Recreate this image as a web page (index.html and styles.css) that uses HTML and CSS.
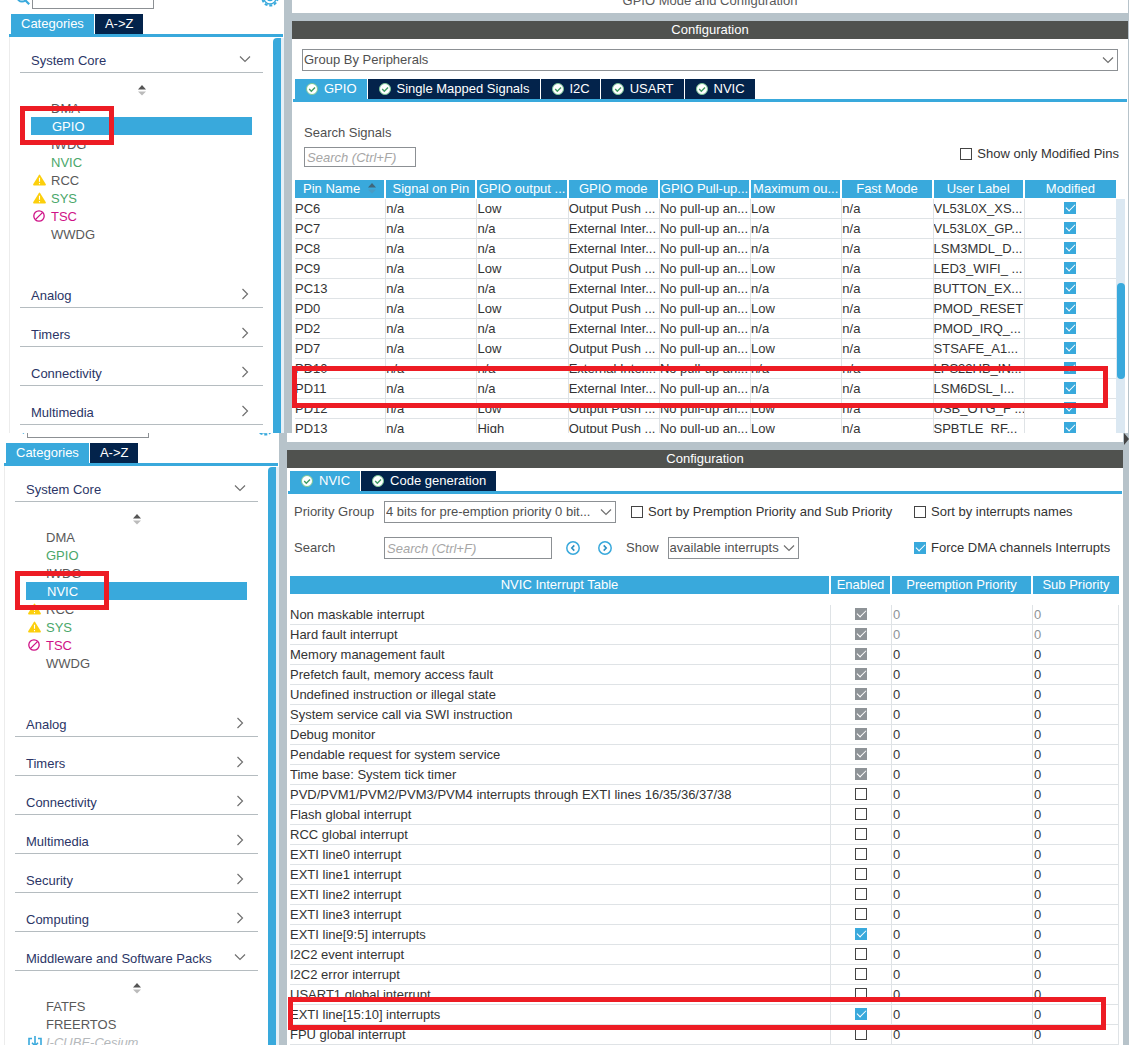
FILE: index.html
```html
<!DOCTYPE html>
<html lang="en">
<head>
<meta charset="utf-8">
<title>GPIO and NVIC Configuration</title>
<link rel="stylesheet" href="styles.css">
</head>
<body>
<svg class="defs" aria-hidden="true">
  <symbol id="ok" viewBox="0 0 12 12"><circle cx="6" cy="6" r="5.5" fill="#fff" stroke="#7cc796"/><path d="M3.2 6.1 5.3 8.2 9 4.4" fill="none" stroke="#3f9c62" stroke-width="1.4"/></symbol>
  <symbol id="down" viewBox="0 0 12 12"><path d="M1 3.5 6 8.5 11 3.5" fill="none" stroke="#707070" stroke-width="1.2"/></symbol>
  <symbol id="right" viewBox="0 0 12 12"><path d="M3.5 1 8.5 6 3.5 11" fill="none" stroke="#707070" stroke-width="1.2"/></symbol>
  <symbol id="sort" viewBox="0 0 8 12"><path d="M4 1 8 5.5H0Z" fill="#555"/><path d="M4 11.5 8 7.5H0Z" fill="#bbb"/></symbol>
  <symbol id="sorthead" viewBox="0 0 8 12"><path d="M4 1 8 5.5H0Z" fill="#40667a"/><path d="M4 11.5 8 7.5H0Z" fill="#4a9cc4"/></symbol>
  <symbol id="warn" viewBox="0 0 14 12"><path d="M6.2.8q.8-1.2 1.6 0l6 9.8q.3 1.2-.8 1.4H1q-1.1-.2-.8-1.4Z" fill="#fccf0c"/><path d="M7 3.5V8M7 9.2v1.4" stroke="#fff" stroke-width="1.2"/></symbol>
  <symbol id="no" viewBox="0 0 12 12"><circle cx="6" cy="6" r="5.2" fill="none" stroke="#cf1287" stroke-width="1.3"/><path d="M2.6 9.4 9.4 2.6" stroke="#cf1287" stroke-width="1.3"/></symbol>
  <symbol id="glass" viewBox="0 0 14 14"><circle cx="6" cy="6" r="4.6" fill="none" stroke="#39a9dc" stroke-width="2"/><path d="m9.3 9.3 3.9 3.9" stroke="#39a9dc" stroke-width="2.2"/></symbol>
  <symbol id="gear" viewBox="0 0 18 18"><circle cx="9" cy="9" r="7.6" fill="none" stroke="#39a9dc" stroke-width="2" stroke-dasharray="3 1.8"/><circle cx="9" cy="9" r="6" fill="none" stroke="#39a9dc" stroke-width="1.4"/><circle cx="9" cy="9" r="2.6" fill="none" stroke="#39a9dc" stroke-width="1.4"/></symbol>
  <symbol id="prev" viewBox="0 0 14 14"><circle cx="7" cy="7" r="6.2" fill="none" stroke="#39a9dc" stroke-width="1.5"/><path d="M8.3 4.4 5.8 7l2.5 2.6" fill="none" stroke="#2b8fc2" stroke-width="1.6"/></symbol>
  <symbol id="next" viewBox="0 0 14 14"><circle cx="7" cy="7" r="6.2" fill="none" stroke="#39a9dc" stroke-width="1.5"/><path d="M5.7 4.4 8.2 7 5.7 9.6" fill="none" stroke="#2b8fc2" stroke-width="1.6"/></symbol>
  <symbol id="install" viewBox="0 0 14 14"><path d="M4 2.5H1V13h12V2.5h-3M7 0v9.5M4 6.8l3 3 3-3" fill="none" stroke="#39a9dc" stroke-width="1.6"/></symbol>
</svg>

<section class="pane pane-gpio">
  <aside class="side">
    <div class="side-search">
      <svg class="i-glass"><use href="#glass"/></svg>
      <select aria-label="Search peripherals"><option></option></select>
      <svg class="i-gear"><use href="#gear"/></svg>
    </div>
    <nav class="tabs side-tabs"><button class="tab on">Categories</button><button class="tab">A-&gt;Z</button></nav>
    <div class="side-body">
      <div class="sections">
        <button class="head"><span>System Core</span><svg class="i12"><use href="#down"/></svg></button>
        <div class="open">
          <svg class="i-sort"><use href="#sort"/></svg>
          <ul>
            <li>DMA</li>
            <li class="selected">GPIO<span class="mark"></span></li>
            <li>IWDG</li>
            <li class="green">NVIC</li>
            <li><svg class="i-warn"><use href="#warn"/></svg>RCC</li>
            <li class="green"><svg class="i-warn"><use href="#warn"/></svg>SYS</li>
            <li class="pink"><svg class="i-no"><use href="#no"/></svg>TSC</li>
            <li>WWDG</li>
          </ul>
        </div>
        <button class="head"><span>Analog</span><svg class="i12"><use href="#right"/></svg></button>
        <button class="head"><span>Timers</span><svg class="i12"><use href="#right"/></svg></button>
        <button class="head"><span>Connectivity</span><svg class="i12"><use href="#right"/></svg></button>
        <button class="head"><span>Multimedia</span><svg class="i12"><use href="#right"/></svg></button>
      </div>
      <div class="side-scroll"></div>
    </div>
  </aside>
  <div class="gutter"></div>
  <main class="main">
    <div class="mode-title">GPIO Mode and Configuration</div>
    <h2 class="bar">Configuration</h2>
    <div class="combo group-by">
      <select aria-label="Group by"><option>Group By Peripherals</option></select>
      <svg class="i12"><use href="#down"/></svg>
    </div>
    <nav class="tabs">
      <button class="tab on"><svg class="i12"><use href="#ok"/></svg>GPIO</button><button class="tab"><svg class="i12"><use href="#ok"/></svg>Single Mapped Signals</button><button class="tab"><svg class="i12"><use href="#ok"/></svg>I2C</button><button class="tab"><svg class="i12"><use href="#ok"/></svg>USART</button><button class="tab"><svg class="i12"><use href="#ok"/></svg>NVIC</button>
    </nav>
    <div class="signals">
      <div class="signal-search">
        <label for="sig">Search Signals</label>
        <input id="sig" type="text" placeholder="Search (Ctrl+F)">
      </div>
      <label class="check"><input type="checkbox">Show only Modified Pins</label>
    </div>
    <div class="pins-wrap">
      <table class="pins">
        <thead><tr><th>Pin Name<svg class="i-sort"><use href="#sorthead"/></svg></th><th>Signal on Pin</th><th>GPIO output ...</th><th>GPIO mode</th><th>GPIO Pull-up...</th><th>Maximum ou...</th><th>Fast Mode</th><th>User Label</th><th>Modified</th></tr></thead>
        <tbody>
          <tr><td>PC6</td><td>n/a</td><td>Low</td><td>Output Push ...</td><td>No pull-up an...</td><td>Low</td><td>n/a</td><td>VL53L0X_XS...</td><td><input type="checkbox" aria-label="PC6 modified" checked></td></tr>
          <tr><td>PC7</td><td>n/a</td><td>n/a</td><td>External Inter...</td><td>No pull-up an...</td><td>n/a</td><td>n/a</td><td>VL53L0X_GP...</td><td><input type="checkbox" aria-label="PC7 modified" checked></td></tr>
          <tr><td>PC8</td><td>n/a</td><td>n/a</td><td>External Inter...</td><td>No pull-up an...</td><td>n/a</td><td>n/a</td><td>LSM3MDL_D...</td><td><input type="checkbox" aria-label="PC8 modified" checked></td></tr>
          <tr><td>PC9</td><td>n/a</td><td>Low</td><td>Output Push ...</td><td>No pull-up an...</td><td>Low</td><td>n/a</td><td>LED3_WIFI_ ...</td><td><input type="checkbox" aria-label="PC9 modified" checked></td></tr>
          <tr><td>PC13</td><td>n/a</td><td>n/a</td><td>External Inter...</td><td>No pull-up an...</td><td>n/a</td><td>n/a</td><td>BUTTON_EX...</td><td><input type="checkbox" aria-label="PC13 modified" checked></td></tr>
          <tr><td>PD0</td><td>n/a</td><td>Low</td><td>Output Push ...</td><td>No pull-up an...</td><td>Low</td><td>n/a</td><td>PMOD_RESET</td><td><input type="checkbox" aria-label="PD0 modified" checked></td></tr>
          <tr><td>PD2</td><td>n/a</td><td>n/a</td><td>External Inter...</td><td>No pull-up an...</td><td>n/a</td><td>n/a</td><td>PMOD_IRQ_...</td><td><input type="checkbox" aria-label="PD2 modified" checked></td></tr>
          <tr><td>PD7</td><td>n/a</td><td>Low</td><td>Output Push ...</td><td>No pull-up an...</td><td>Low</td><td>n/a</td><td>STSAFE_A1...</td><td><input type="checkbox" aria-label="PD7 modified" checked></td></tr>
          <tr><td>PD10</td><td>n/a</td><td>n/a</td><td>External Inter...</td><td>No pull-up an...</td><td>n/a</td><td>n/a</td><td>LPS22HB_IN...</td><td><input type="checkbox" aria-label="PD10 modified" checked></td></tr>
          <tr class="marked"><td>PD11<span class="mark"></span></td><td>n/a</td><td>n/a</td><td>External Inter...</td><td>No pull-up an...</td><td>n/a</td><td>n/a</td><td>LSM6DSL_I...</td><td><input type="checkbox" aria-label="PD11 modified" checked></td></tr>
          <tr><td>PD12</td><td>n/a</td><td>Low</td><td>Output Push ...</td><td>No pull-up an...</td><td>Low</td><td>n/a</td><td>USB_OTG_F ...</td><td><input type="checkbox" aria-label="PD12 modified" checked></td></tr>
          <tr><td>PD13</td><td>n/a</td><td>High</td><td>Output Push ...</td><td>No pull-up an...</td><td>Low</td><td>n/a</td><td>SPBTLE_RF...</td><td><input type="checkbox" aria-label="PD13 modified" checked></td></tr>
        </tbody>
      </table>
      <div class="track"><div class="thumb"></div></div>
    </div>
  </main>
  <div class="edge"></div>
</section>

<section class="pane pane-nvic">
  <aside class="side">
    <div class="side-search">
      <svg class="i-glass"><use href="#glass"/></svg>
      <select aria-label="Search peripherals"><option></option></select>
      <svg class="i-gear"><use href="#gear"/></svg>
    </div>
    <nav class="tabs side-tabs"><button class="tab on">Categories</button><button class="tab">A-&gt;Z</button></nav>
    <div class="side-body">
      <div class="sections">
        <button class="head"><span>System Core</span><svg class="i12"><use href="#down"/></svg></button>
        <div class="open">
          <svg class="i-sort"><use href="#sort"/></svg>
          <ul>
            <li>DMA</li>
            <li class="green">GPIO</li>
            <li>IWDG</li>
            <li class="selected">NVIC<span class="mark"></span></li>
            <li><svg class="i-warn"><use href="#warn"/></svg>RCC</li>
            <li class="green"><svg class="i-warn"><use href="#warn"/></svg>SYS</li>
            <li class="pink"><svg class="i-no"><use href="#no"/></svg>TSC</li>
            <li>WWDG</li>
          </ul>
        </div>
        <button class="head"><span>Analog</span><svg class="i12"><use href="#right"/></svg></button>
        <button class="head"><span>Timers</span><svg class="i12"><use href="#right"/></svg></button>
        <button class="head"><span>Connectivity</span><svg class="i12"><use href="#right"/></svg></button>
        <button class="head"><span>Multimedia</span><svg class="i12"><use href="#right"/></svg></button>
        <button class="head"><span>Security</span><svg class="i12"><use href="#right"/></svg></button>
        <button class="head"><span>Computing</span><svg class="i12"><use href="#right"/></svg></button>
        <button class="head"><span>Middleware and Software Packs</span><svg class="i12"><use href="#down"/></svg></button>
        <div class="open">
          <svg class="i-sort"><use href="#sort"/></svg>
          <ul>
            <li>FATFS</li>
            <li>FREERTOS</li>
            <li class="pack"><svg class="i-install"><use href="#install"/></svg>I-CUBE-Cesium</li>
          </ul>
        </div>
      </div>
      <div class="side-scroll"></div>
    </div>
  </aside>
  <div class="gutter"></div>
  <main class="main">
    <div class="mode-title"></div>
    <h2 class="bar">Configuration</h2>
    <nav class="tabs">
      <button class="tab on"><svg class="i12"><use href="#ok"/></svg>NVIC</button><button class="tab"><svg class="i12"><use href="#ok"/></svg>Code generation</button>
    </nav>
    <div class="options">
      <label for="prio">Priority Group</label>
      <div class="line">
        <div class="combo prio"><select id="prio"><option>4 bits for pre-emption priority 0 bit...</option></select><svg class="i12"><use href="#down"/></svg></div>
        <label class="check"><input type="checkbox">Sort by Premption Priority and Sub Priority</label>
      </div>
      <label class="check"><input type="checkbox">Sort by interrupts names</label>
      <label for="find">Search</label>
      <div class="line">
        <input id="find" type="text" placeholder="Search (Ctrl+F)">
        <div class="steps">
          <button class="step" aria-label="Previous"><svg><use href="#prev"/></svg></button>
          <button class="step" aria-label="Next"><svg><use href="#next"/></svg></button>
        </div>
        <label for="show">Show</label>
        <div class="combo show"><select id="show"><option>available interrupts</option></select><svg class="i12"><use href="#down"/></svg></div>
      </div>
      <label class="check"><input type="checkbox" checked>Force DMA channels Interrupts</label>
    </div>
    <table class="irqs">
      <colgroup><col><col class="c-en"><col class="c-pre"><col class="c-sub"></colgroup>
      <thead><tr><th>NVIC Interrupt Table</th><th>Enabled</th><th>Preemption Priority</th><th>Sub Priority</th></tr></thead>
      <tbody>
        <tr class="fixed"><td>Non maskable interrupt</td><td><input type="checkbox" aria-label="Enabled" checked disabled></td><td>0</td><td>0</td></tr>
        <tr class="fixed"><td>Hard fault interrupt</td><td><input type="checkbox" aria-label="Enabled" checked disabled></td><td>0</td><td>0</td></tr>
        <tr><td>Memory management fault</td><td><input type="checkbox" aria-label="Enabled" checked disabled></td><td>0</td><td>0</td></tr>
        <tr><td>Prefetch fault, memory access fault</td><td><input type="checkbox" aria-label="Enabled" checked disabled></td><td>0</td><td>0</td></tr>
        <tr><td>Undefined instruction or illegal state</td><td><input type="checkbox" aria-label="Enabled" checked disabled></td><td>0</td><td>0</td></tr>
        <tr><td>System service call via SWI instruction</td><td><input type="checkbox" aria-label="Enabled" checked disabled></td><td>0</td><td>0</td></tr>
        <tr><td>Debug monitor</td><td><input type="checkbox" aria-label="Enabled" checked disabled></td><td>0</td><td>0</td></tr>
        <tr><td>Pendable request for system service</td><td><input type="checkbox" aria-label="Enabled" checked disabled></td><td>0</td><td>0</td></tr>
        <tr><td>Time base: System tick timer</td><td><input type="checkbox" aria-label="Enabled" checked disabled></td><td>0</td><td>0</td></tr>
        <tr><td>PVD/PVM1/PVM2/PVM3/PVM4 interrupts through EXTI lines 16/35/36/37/38</td><td><input type="checkbox" aria-label="Enabled"></td><td>0</td><td>0</td></tr>
        <tr><td>Flash global interrupt</td><td><input type="checkbox" aria-label="Enabled"></td><td>0</td><td>0</td></tr>
        <tr><td>RCC global interrupt</td><td><input type="checkbox" aria-label="Enabled"></td><td>0</td><td>0</td></tr>
        <tr><td>EXTI line0 interrupt</td><td><input type="checkbox" aria-label="Enabled"></td><td>0</td><td>0</td></tr>
        <tr><td>EXTI line1 interrupt</td><td><input type="checkbox" aria-label="Enabled"></td><td>0</td><td>0</td></tr>
        <tr><td>EXTI line2 interrupt</td><td><input type="checkbox" aria-label="Enabled"></td><td>0</td><td>0</td></tr>
        <tr><td>EXTI line3 interrupt</td><td><input type="checkbox" aria-label="Enabled"></td><td>0</td><td>0</td></tr>
        <tr><td>EXTI line[9:5] interrupts</td><td><input type="checkbox" aria-label="Enabled" checked></td><td>0</td><td>0</td></tr>
        <tr><td>I2C2 event interrupt</td><td><input type="checkbox" aria-label="Enabled"></td><td>0</td><td>0</td></tr>
        <tr><td>I2C2 error interrupt</td><td><input type="checkbox" aria-label="Enabled"></td><td>0</td><td>0</td></tr>
        <tr><td>USART1 global interrupt</td><td><input type="checkbox" aria-label="Enabled"></td><td>0</td><td>0</td></tr>
        <tr class="marked"><td>EXTI line[15:10] interrupts<span class="mark"></span></td><td><input type="checkbox" aria-label="Enabled" checked></td><td>0</td><td>0</td></tr>
        <tr><td>FPU global interrupt</td><td><input type="checkbox" aria-label="Enabled"></td><td>0</td><td>0</td></tr>
      </tbody>
    </table>
  </main>
  <div class="edge"><svg viewBox="0 0 6 12"><path d="M1 0 6 6 1 12Z" fill="#444"/></svg></div>
</section>
</body>
</html>
```
FILE: styles.css
```css
:root {
  --blue: #39a9dc;
  --navy: #03234b;
  --gutter: #b7c3ca;
  --rule: #dfe3e6;
  --red: #ed1c24;
  --field: #8c9094;
}

* { box-sizing: border-box; }

body {
  margin: 0;
  height: 100vh;
  display: grid;
  grid-template-rows: 433fr 612fr;
  overflow: hidden;
  background: #fff;
  color: #333;
  font: 13px/18px "Liberation Sans", Arial, sans-serif;
}

button, input, select { font: inherit; color: inherit; margin: 0; border-radius: 0; }
button { border: 0; padding: 0; background: none; }
svg { display: block; flex: none; }
.defs { position: absolute; width: 0; height: 0; }
.i12 { width: 12px; height: 12px; }

.pane { display: flex; min-height: 0; overflow: hidden; }

/* Sidebar */
.side { flex: none; width: 284px; padding-left: 9px; display: flex; flex-direction: column; }
.pane-nvic .side { width: 279px; padding-left: 4px; }

.side-search {
  flex: none;
  height: 14px;
  display: flex;
  align-items: flex-end;
  overflow: hidden;
  padding: 0 5px 5px 7px;
}
.pane-nvic .side-search { height: 10px; }
.side-search select {
  appearance: none;
  width: 122px;
  height: 20px;
  margin: 0 auto 0 2px;
  background: #fff;
  border: 1px solid var(--field);
}
.i-glass { width: 14px; height: 14px; margin-bottom: 4px; }
.i-gear { width: 18px; height: 18px; margin-bottom: 2px; }

.tabs {
  flex: none;
  display: flex;
  gap: 1px;
  margin: 0 1px;
  padding-left: 2px;
  border-bottom: 3px solid var(--blue);
}
.side-tabs { margin: 0 1px 0 0; }
.tab {
  display: flex;
  align-items: center;
  gap: 6px;
  height: 20px;
  padding: 0 10px 0 11px;
  background: var(--navy);
  color: #fff;
  line-height: 20px;
  white-space: nowrap;
}
.tab.on { background: var(--blue); }
.side-tabs .tab { padding: 0 10px; }

.side-body {
  flex: 1;
  min-height: 0;
  display: flex;
  overflow: hidden;
  border-left: 1px solid #ececec;
}
.sections { flex: 1; padding: 0 10px; }
.side-scroll {
  flex: none;
  width: 11px;
  margin-top: 1px;
  border-right: 3px solid #e6f0f7;
  background: var(--blue);
  border-top-left-radius: 4px;
}

.head {
  display: flex;
  justify-content: space-between;
  align-items: center;
  width: 100%;
  padding: 18px 12px 2px 11px;
  border-bottom: 1px solid #b5bcc0;
  color: #2b3566;
  text-align: left;
}
.head:first-child { padding-top: 15px; }
.head svg { margin-bottom: 5px; }

.open { padding: 11px 11px 26px; }
.open ul { list-style: none; margin: 3px 0 0; padding: 0; }
.open .i-sort { margin: 0 auto; }
.open li {
  position: relative;
  height: 18px;
  padding-left: 20px;
  color: #595959;
  line-height: 20px;
}
.open li svg { position: absolute; left: 2px; top: 3px; }
.open li.green { color: #4aa76a; }
.open li.pink { color: #cf1287; }
.open li.pack { color: #b4b8bb; font-style: italic; }
.open li.selected { background: var(--blue); color: #fff; padding-left: 21px; }
.i-sort { width: 8px; height: 12px; }
.i-warn { width: 13px; height: 12px; }
.i-no { width: 12px; height: 12px; }
.i-install { width: 14px; height: 14px; }

/* Red callout frames drawn over rows */
.mark { position: absolute; z-index: 2; border: 5px solid var(--red); pointer-events: none; }
.selected .mark { left: -11px; top: -11px; width: 94px; height: 39px; }

.gutter { flex: none; width: 8px; background: var(--gutter); }
.edge { flex: none; width: 1px; background: var(--gutter); }
.pane-nvic .edge { width: 6px; }
.edge svg { width: 6px; height: 12px; }

/* Main column */
.main { flex: 1; min-width: 0; display: flex; flex-direction: column; }
.mode-title {
  flex: none;
  height: 21px;
  display: flex;
  justify-content: center;
  align-items: flex-end;
  overflow: hidden;
  padding-bottom: 3px;
  border-bottom: 8px solid var(--gutter);
  color: #595959;
}
.pane-nvic .mode-title { height: 17px; }
.bar {
  flex: none;
  margin: 0;
  background: #50524f;
  color: #fff;
  font-size: 13px;
  font-weight: normal;
  text-align: center;
}
.pane-nvic .main .tabs { margin-top: 3px; }

.combo { position: relative; height: 22px; color: #505050; }
.combo select {
  appearance: none;
  width: 100%;
  height: 100%;
  padding: 0 1px;
  background: #fff;
  border: 1px solid var(--field);
}
.combo svg { position: absolute; right: 4px; top: 5px; pointer-events: none; }
.group-by { flex: none; margin: 10px 10px 8px; }

input[type="text"] {
  height: 22px;
  padding: 0 2px;
  background: #fff;
  border: 1px solid var(--field);
}
input::placeholder { color: #a6a6a6; font-style: italic; opacity: 1; }

input[type="checkbox"] {
  appearance: none;
  flex: none;
  width: 12px;
  height: 12px;
  display: grid;
  place-items: center;
  border: 1px solid #444;
  background: #fff;
}
input[type="checkbox"]:checked { background: var(--blue); border-color: var(--blue); }
input[type="checkbox"]:checked:disabled { background: #8e9397; border-color: #8e9397; }
input[type="checkbox"]:checked::before {
  content: "";
  width: 8px;
  height: 4px;
  margin-bottom: 3px;
  border: solid #fff;
  border-width: 0 0 1px 1px;
  transform: rotate(-45deg);
}
.check { display: flex; align-items: center; gap: 5px; white-space: nowrap; }

.signals {
  flex: none;
  display: flex;
  justify-content: space-between;
  align-items: flex-end;
  padding: 22px 9px 13px 12px;
}
.signal-search { display: flex; flex-direction: column; gap: 5px; color: #505050; }
.signal-search input { width: 112px; height: 20px; }
.signals .check { margin-bottom: 4px; }

/* Tables */
.pins-wrap { display: flex; align-items: stretch; padding: 0 3px; min-height: 0; }
table { table-layout: fixed; border-spacing: 0; }
.pins { flex: 1; width: 100%; align-self: flex-start; }
th {
  height: 18px;
  padding: 0;
  background: var(--blue);
  background-clip: padding-box;
  border-right: 2px solid #fff;
  color: #fff;
  font-weight: normal;
  line-height: 18px;
  white-space: nowrap;
  overflow: hidden;
}
th:last-child { border-right: 0; }
th .i-sort { display: inline-block; margin-left: 8px; vertical-align: -1px; }
td {
  height: 20px;
  padding: 0;
  border-right: 1px solid var(--rule);
  border-bottom: 1px solid var(--rule);
  line-height: 19px;
  white-space: nowrap;
  overflow: hidden;
}
td input[type="checkbox"] { margin: 0 auto 1px; }
.pins th { height: 19px; border-bottom: 1px solid #fff; }
.pins td:last-child { border-right: 0; }
.marked { position: relative; }
.pins .mark { left: -3px; right: 8px; top: -13px; height: 42px; }

.track { flex: none; width: 9px; margin-top: 19px; padding: 84px 0 0 1px; background: #dbe8f2; }
.thumb { height: 96px; border-radius: 4px; background: var(--blue); }

.options {
  display: grid;
  grid-template-columns: 90px 1fr 205px;
  row-gap: 14px;
  align-items: center;
  padding: 7px 4px 17px 7px;
}
.options > label:not(.check), .line > label:not(.check) { color: #505050; }
.line { display: flex; align-items: center; }
.prio { width: 232px; margin-right: 15px; }
#find { width: 168px; }
.steps { display: flex; gap: 18px; margin: 0 14px; }
.step svg { width: 14px; height: 14px; }
.show { width: 131px; margin-left: 9px; }

.irqs { margin: 0 4px 0 3px; }
.irqs th { height: 29px; border-bottom: 11px solid #fff; }
.c-en { width: 61px; }
.c-pre { width: 141px; }
.c-sub { width: 86px; }
.irqs td:nth-child(n+3) { padding-left: 1px; }
.fixed td:nth-child(n+3) { color: #8e9397; }
.irqs .mark { left: -2px; right: 13px; top: -8px; height: 33px; }
```
